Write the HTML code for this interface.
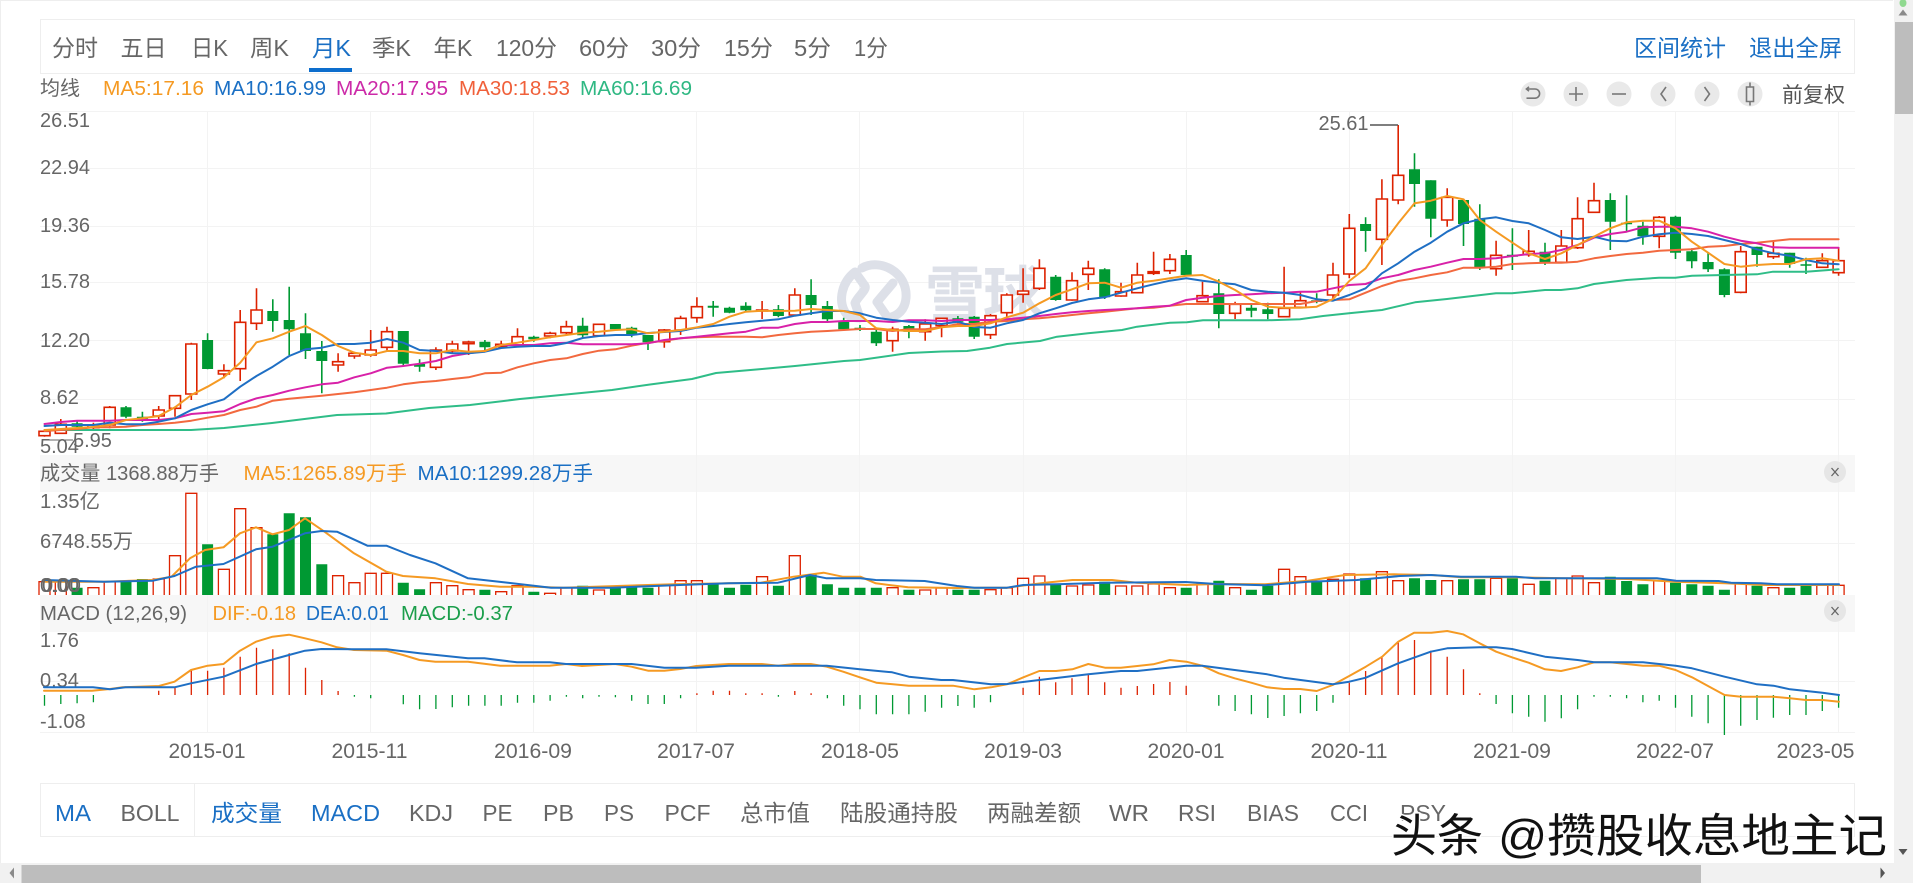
<!DOCTYPE html>
<html lang="zh-CN">
<head>
<meta charset="utf-8">
<title>月K</title>
<style>
html,body{margin:0;padding:0;background:#fff;overflow:hidden;width:1913px;height:883px}
svg{display:block}
text{font-family:"Liberation Sans","Noto Sans CJK SC",sans-serif;fill:#666}
.t{font-size:23px}
.s{font-size:20px}
.b{fill:#1a6fc4}
.o{fill:#f59a23}
.g{fill:#1b9e4b}
.l{fill:none;stroke-width:2;stroke-linejoin:round;stroke-linecap:round}
</style>
</head>
<body>
<svg width="1913" height="883" viewBox="0 0 1913 883" xmlns="http://www.w3.org/2000/svg">
<rect width="1913" height="883" fill="#fff"/>
<rect x="0" y="0" width="1893" height="1" fill="#eee"/>
<rect x="0" y="0" width="1" height="863" fill="#eee"/>

<!-- nav -->
<rect x="40.5" y="19.5" width="1814" height="54" fill="#fff" stroke="#eee"/>
<g class="t">
<text x="52" y="56" textLength="46" lengthAdjust="spacingAndGlyphs">分时</text>
<text x="120.5" y="56" textLength="46" lengthAdjust="spacingAndGlyphs">五日</text>
<text x="191" y="56" textLength="37" lengthAdjust="spacingAndGlyphs">日K</text>
<text x="250" y="56" textLength="39" lengthAdjust="spacingAndGlyphs">周K</text>
<text x="312" y="56" textLength="39" lengthAdjust="spacingAndGlyphs" class="b">月K</text>
<text x="372" y="56" textLength="39" lengthAdjust="spacingAndGlyphs">季K</text>
<text x="433.5" y="56" textLength="39" lengthAdjust="spacingAndGlyphs">年K</text>
<text x="496" y="56" textLength="61" lengthAdjust="spacingAndGlyphs">120分</text>
<text x="579" y="56" textLength="50" lengthAdjust="spacingAndGlyphs">60分</text>
<text x="651" y="56" textLength="50" lengthAdjust="spacingAndGlyphs">30分</text>
<text x="724" y="56" textLength="49" lengthAdjust="spacingAndGlyphs">15分</text>
<text x="794" y="56" textLength="37" lengthAdjust="spacingAndGlyphs">5分</text>
<text x="854" y="56" textLength="34" lengthAdjust="spacingAndGlyphs">1分</text>
<text x="1634" y="56" textLength="92" lengthAdjust="spacingAndGlyphs" class="b">区间统计</text>
<text x="1749" y="56" textLength="93" lengthAdjust="spacingAndGlyphs" class="b">退出全屏</text>
</g>
<rect x="309" y="68" width="43" height="4" fill="#0d6ecd"/>

<!-- legend -->
<g class="s">
<text x="40" y="95" textLength="40" lengthAdjust="spacingAndGlyphs">均线</text>
<text x="103" y="95" textLength="101" lengthAdjust="spacingAndGlyphs" class="o">MA5:17.16</text>
<text x="214" y="95" textLength="112" lengthAdjust="spacingAndGlyphs" class="b">MA10:16.99</text>
<text x="336" y="95" textLength="112" lengthAdjust="spacingAndGlyphs" style="fill:#cc2aa8">MA20:17.95</text>
<text x="459" y="95" textLength="111" lengthAdjust="spacingAndGlyphs" style="fill:#f0603a">MA30:18.53</text>
<text x="580" y="95" textLength="112" lengthAdjust="spacingAndGlyphs" style="fill:#2fb883">MA60:16.69</text>
</g>

<!-- toolbar icons -->
<g fill="#e9e9e9">
<circle cx="1533" cy="94" r="12.5"/><circle cx="1576" cy="94" r="12.5"/><circle cx="1619" cy="94" r="12.5"/>
<circle cx="1663" cy="94" r="12.5"/><circle cx="1707" cy="94" r="12.5"/><circle cx="1750" cy="94" r="12.5"/>
</g>
<g fill="none" stroke="#777" stroke-width="1.6">
<path d="M1526.5 89H1535a4.6 4.6 0 0 1 0 9.2H1526.5M1529 86.8l-2.6 2.2l2.6 2.2"/>
<path d="M1569 94H1583M1576 87V101"/>
<path d="M1612 94H1626"/>
<path d="M1666 87l-5 7l5 7"/>
<path d="M1704.5 87l5 7l-5 7"/>
<path d="M1746.5 87h7v14.5h-7zM1750 82.5V87M1750 101.5V105.5"/>
</g>
<text x="1782" y="102" font-size="21" textLength="63" lengthAdjust="spacingAndGlyphs" style="fill:#555">前复权</text>

<!-- pane headers -->
<rect x="40" y="455" width="1815" height="37" fill="#f7f7f7"/>
<rect x="40" y="595" width="1815" height="37" fill="#f7f7f7"/>

<!-- grid -->
<g stroke="#f3f3f3" stroke-width="1" fill="none">
<path d="M40 111.5H1855M40 168.5H1855M40 226.5H1855M40 282.5H1855M40 340.5H1855M40 399.5H1855M40 543.5H1855M40 681.5H1855M40 732.5H1855"/>
<path d="M207.5 112V733M370.5 112V733M533.5 112V733M696.5 112V733M859.5 112V733M1023.5 112V733M1186.5 112V733M1349.5 112V733M1512.5 112V733M1675.5 112V733M1838.5 112V733"/>
</g>

<!-- xueqiu watermark -->
<g fill="none" stroke="#dde0e8" stroke-width="9" stroke-linejoin="round" stroke-linecap="round">
<path d="M862 268C880 258 908 272 906 298C905 310 898 316 888 318L877 302L893 283"/>
<path d="M855 272C842 282 838 300 845 312C848 317 855 318 860 318L855 303C858 296 867 290 865 286L855 272"/>
</g>
<text x="925" y="316" font-size="60" font-weight="700" style="fill:#dde0e8" textLength="118" lengthAdjust="spacing">雪球</text>

<!-- candles -->
<path fill="none" stroke="#009933" stroke-width="1.6" d="M77.1 420.7V428.3M126 406V418.3M142.4 411.7V421.7M207.6 333.3V369.3M272.8 299.3V331.7M289.2 286.7V355M305.5 313.3V359M321.8 341V393.3M403.3 331V366M419.6 359.3V371.7M484.9 340V352M533.8 335.7V341.7M582.7 317.7V338.3M615.4 324V330M631.7 326.7V337.3M648 335V350M713.2 301V316.7M729.5 306.7V313.3M745.8 302.3V311.7M778.4 305V317.3M811.1 279.3V315M827.4 301V321.7M843.7 317.7V330M860 325V331M876.3 328.3V346M908.9 325V338.3M957.9 316V323.3M974.2 316V339M1055.7 275V300.7M1104.7 268.3V299M1186.2 250V276M1218.8 279.3V328.3M1251.4 303.3V317.3M1267.8 302.7V319.3M1316.7 293.3V303.3M1365.6 217.3V251.7M1414.5 153.3V206.7M1430.8 180.3V237.3M1463.5 200V246M1479.8 204.3V270M1512.4 228.3V270M1545 242.7V265M1610.3 193.3V250M1626.6 195.3V231.7M1642.9 221.7V244.7M1675.5 215.7V259M1691.8 248.3V268.3M1708.1 252.3V272M1724.4 268.3V297.3M1757 246.7V266.7M1789.7 252.7V267.7M1806 257.7V274"/>
<path fill="#009933" d="M71.6 423.3h11V426.7h-11zM120.5 407.3h11V416.7h-11zM136.9 416.7h11V419h-11zM202.1 340h11V369h-11zM267.3 311h11V321h-11zM283.7 320h11V329.3h-11zM300 333.3h11V351h-11zM316.3 351h11V361h-11zM397.8 331h11V363.7h-11zM414.1 364h11V366.7h-11zM479.4 341.7h11V347.3h-11zM528.3 336.7h11V339.3h-11zM577.2 325.7h11V335.3h-11zM609.9 324h11V329.3h-11zM626.2 327.7h11V335.3h-11zM642.5 335h11V342.3h-11zM707.7 305.7h11V307.7h-11zM724 307.7h11V312.7h-11zM740.3 305.7h11V310.3h-11zM772.9 309.3h11V316h-11zM805.6 295h11V305h-11zM821.9 306h11V319.3h-11zM838.2 321.7h11V329.3h-11zM854.5 327.7h11V330h-11zM870.8 331.7h11V343.3h-11zM903.4 326h11V331.7h-11zM952.4 318.3h11V321.7h-11zM968.7 316.7h11V336.7h-11zM1050.2 276.7h11V300h-11zM1099.2 269.3h11V297.3h-11zM1180.7 255h11V275h-11zM1213.3 293.3h11V314h-11zM1245.9 307.7h11V310.7h-11zM1262.3 309.3h11V314h-11zM1311.2 300.3h11V302h-11zM1360.1 224h11V231h-11zM1409 169.3h11V184h-11zM1425.3 180.3h11V218.7h-11zM1458 200h11V224h-11zM1474.3 218.7h11V267.7h-11zM1506.9 254.7h11V256.7h-11zM1539.5 251.7h11V262.3h-11zM1604.8 200h11V221.7h-11zM1621.1 222.7h11V224.3h-11zM1637.4 225.7h11V236.3h-11zM1670 216.7h11V252.7h-11zM1686.3 251.3h11V261.3h-11zM1702.6 262h11V269.3h-11zM1718.9 269.3h11V295h-11zM1751.5 246.7h11V255h-11zM1784.2 252.7h11V264h-11zM1800.5 264.3h11V265.7h-11z"/>
<path fill="none" stroke="#dd2200" stroke-width="1.6" d="M44.5 430V436.7M60.8 419V434M93.4 422.7V429.3M109.7 406V428.3M158.7 406V420M175 395V416.7M191.3 342.7V400M223.9 364.3V378.3M240.2 310V381M256.5 288.3V330M338.1 353.3V371.7M354.4 351.7V358.7M370.7 330V356.7M387 326.7V351.7M435.9 347.3V370M452.3 340.7V353.3M468.6 340.7V355M501.2 340.7V348.3M517.5 328.3V346.7M550.1 331.7V338.3M566.4 320.7V335M599 324V336M664.3 329V347.7M680.6 315.7V335M696.9 297.3V322.7M762.1 301V319M794.8 288.3V316M892.6 326.7V351.7M925.2 319.3V340.7M941.6 318.3V337.3M990.5 314V339M1006.8 293.3V318.3M1023.1 268.3V302.7M1039.4 259.3V290M1072 272.3V300.7M1088.3 260.7V290M1121 282.7V296.7M1137.3 262.7V293.3M1153.6 251.7V275M1169.9 254V274M1202.5 281.7V302.3M1235.1 301.7V319M1284.1 266.7V317.3M1300.4 291.7V308.3M1333 262.7V300M1349.3 214V278.3M1381.9 179.3V265M1398.2 125V204.3M1447.2 188.3V226.7M1496.1 240.7V275.7M1528.7 230V256.7M1561.3 230V263.3M1577.6 197.3V249M1594 182.7V212.3M1659.2 216V248.3M1740.7 246V293.3M1773.4 241.7V259M1822.3 253.3V267.7M1838.6 248.3V275.7"/>
<path fill="#fff" stroke="#dd2200" stroke-width="1.6" d="M39 431.3h11V435.7h-11zM55.3 424.3h11V433.3h-11zM87.9 425h11V427.7h-11zM104.2 407.3h11V425h-11zM153.2 410h11V416h-11zM169.5 395.7h11V408.3h-11zM185.8 344h11V394h-11zM218.4 370.7h11V374h-11zM234.7 322.3h11V368.7h-11zM251 310h11V323.3h-11zM332.6 361.7h11V365h-11zM348.9 353.3h11V356h-11zM365.2 350h11V355h-11zM381.5 331.7h11V347.3h-11zM430.4 350h11V367.3h-11zM446.8 344h11V351h-11zM463.1 342h11V343.7h-11zM495.7 344.3h11V346.7h-11zM512 336.7h11V345h-11zM544.6 333.3h11V336h-11zM560.9 326.7h11V332.7h-11zM593.5 324.3h11V335.7h-11zM658.8 330h11V341.7h-11zM675.1 318.3h11V330h-11zM691.4 306.7h11V317.7h-11zM756.6 310h11V311h-11zM789.3 295h11V315h-11zM887.1 329.3h11V340.7h-11zM919.7 324h11V331.7h-11zM936.1 318.3h11V325.7h-11zM985 315.7h11V334.7h-11zM1001.3 295h11V312.7h-11zM1017.6 291h11V294.3h-11zM1033.9 268.3h11V288.3h-11zM1066.5 280.7h11V300h-11zM1082.8 268.3h11V274.3h-11zM1115.5 291.7h11V296h-11zM1131.8 275h11V292.7h-11zM1148.1 271.7h11V273.3h-11zM1164.4 259.3h11V270.7h-11zM1197 295.7h11V301.7h-11zM1229.6 304.3h11V313.3h-11zM1278.6 308.3h11V316.7h-11zM1294.9 300.7h11V307.3h-11zM1327.5 275h11V295h-11zM1343.8 228.3h11V274h-11zM1376.4 199h11V239.3h-11zM1392.7 175.3h11V200h-11zM1441.7 197.3h11V220h-11zM1490.6 255.3h11V268.7h-11zM1523.2 251.3h11V254.7h-11zM1555.8 246h11V262.3h-11zM1572.1 218.7h11V247.7h-11zM1588.5 200.7h11V212.3h-11zM1653.7 217.3h11V236.3h-11zM1735.2 251.7h11V292.3h-11zM1767.9 253.3h11V256.7h-11zM1816.8 260.7h11V267.3h-11zM1833.1 260.7h11V272.7h-11z"/>

<!-- MA lines -->
<polyline class="l" stroke="#2fbd88" points="44.5,430 191,430 224,428 272,423 337,415 386,413.5 429,408 470,405 520,399 612,390 650,384.5 692,379 716,373 762,369 795,366 844,361 860,360 909,353 942,351.5 967,351 990,347.7 1007,344 1040,341 1057,336.7 1088,333.3 1122,330 1137,326.7 1170,322.7 1187,322.3 1203,320.3 1267,320.3 1300,319.3 1323,316 1349,313.3 1382,310 1415,302.3 1447,299 1496,293.3 1512,293.3 1545,290 1561,290 1577.5,288.3 1594,284 1626.5,280 1659,277.7 1675.4,277.7 1692,275.7 1724,275 1757,274.3 1773,271.7 1806,271.7 1838.6,269.3"/>
<polyline class="l" stroke="#f2693f" points="44.5,431 60.8,430 77.1,429 93.4,427.3 109.7,427.3 126,426.7 142.4,425 158.7,424 175,422.7 191.3,420.7 207.6,417.7 223.9,415 240.2,410 256.5,406.7 272.8,400.7 289.2,398.7 305.5,397.3 321.8,395.7 338.1,394 354.4,392.3 370.7,390 387,387.7 403.3,384.3 419.6,382.3 435.9,381 452.3,379 468.6,377.3 484.9,373.3 501.2,372.7 517.5,367.3 533.8,363.3 550.1,360 566.4,358.3 582.7,354 599,350.7 615.4,349.3 631.7,345.7 648,342.7 664.3,340.7 680.6,338.3 696.9,337.3 713.2,336.7 729.5,336.7 745.8,336.7 762.1,337.3 778.4,335 794.8,333.3 811.1,331.7 827.4,331 843.7,330 860,329 876.3,329 892.6,331 908.9,329.3 925.2,329.3 941.6,327.3 957.9,324 974.2,324 990.5,321.7 1006.8,321 1023.1,319.3 1039.4,318.3 1055.7,316.7 1072,315 1088.3,313.3 1104.7,311.7 1121,310 1137.3,308.3 1153.6,307.7 1169.9,305.7 1186.2,304 1202.5,304 1218.8,304 1235.1,304 1251.4,304 1267.8,304 1284.1,304 1300.4,304 1316.7,301 1333,300 1349.3,299.3 1365.6,292.7 1381.9,286 1398.2,281 1414.5,278.3 1430.8,275 1447.2,272.3 1463.5,267.7 1479.8,267.7 1496.1,266.7 1512.4,264 1528.7,263.3 1545,262.7 1561.3,262.7 1577.6,261.7 1594,258.3 1610.3,256 1626.6,254 1642.9,252.7 1659.2,250.7 1675.5,250 1691.8,249.3 1708.1,246.7 1724.4,246 1740.7,244 1757,242.7 1773.4,241 1789.7,239.3 1806,239.3 1822.3,239.3 1838.6,239.3"/>
<polyline class="l" stroke="#d821a8" points="44.5,424 60.8,422 77.1,420.7 93.4,420.7 109.7,420.7 126,420 142.4,420 158.7,420 175,418.3 191.3,414 207.6,412.7 223.9,411.3 240.2,404 256.5,398.3 272.8,395 289.2,390.7 305.5,387.3 321.8,384.3 338.1,382.7 354.4,377.3 370.7,373.3 387,367.7 403.3,366 419.6,363.7 435.9,361 452.3,356 468.6,353.3 484.9,351 501.2,345 517.5,345 533.8,345 550.1,343.3 566.4,342.7 582.7,344.3 599,344.3 615.4,344.3 631.7,344.3 648,343.3 664.3,340 680.6,338.3 696.9,336.7 713.2,335 729.5,333.3 745.8,331.7 762.1,327.7 778.4,327.7 794.8,324 811.1,322 827.4,322 843.7,321 860,321 876.3,321 892.6,322 908.9,320.3 925.2,320.3 941.6,321 957.9,320 974.2,320 990.5,320 1006.8,319.3 1023.1,317.7 1039.4,316 1055.7,314 1072,312.3 1088.3,311 1104.7,310 1121,309.3 1137.3,308.3 1153.6,306.7 1169.9,305.7 1186.2,300 1202.5,297.7 1218.8,296 1235.1,295 1251.4,294.3 1267.8,293.3 1284.1,292.7 1300.4,291.7 1316.7,291.7 1333,288.3 1349.3,285 1365.6,284 1381.9,278.3 1398.2,275 1414.5,270 1430.8,266.7 1447.2,262.7 1463.5,259 1479.8,259 1496.1,258.3 1512.4,256 1528.7,254 1545,253.3 1561.3,250 1577.6,245 1594,237.7 1610.3,234 1626.6,231.7 1642.9,227.3 1659.2,226.7 1675.5,226.7 1691.8,228.3 1708.1,231.7 1724.4,236.7 1740.7,240.7 1757,243.3 1773.4,247.3 1789.7,247.7 1806,247.7 1822.3,247.7 1838.6,247.7"/>
<polyline class="l" stroke="#1f6fc4" points="44.5,426 60.8,425 77.1,425 93.4,425 109.7,422.7 126,424.3 142.4,424.3 158.7,421.7 175,418.3 191.3,410 207.6,404.3 223.9,399.3 240.2,386.7 256.5,376 272.8,366.7 289.2,356 305.5,349.3 321.8,347.7 338.1,344 354.4,344 370.7,342.7 387,339 403.3,342.7 419.6,350 435.9,351 452.3,353.3 468.6,353.3 484.9,351.7 501.2,348 517.5,346.7 533.8,346 550.1,346 566.4,343 582.7,338 599,336 615.4,335 631.7,335 648,333 664.3,332 680.6,331 696.9,327.7 713.2,326 729.5,324 745.8,322.3 762.1,320.7 778.4,319.3 794.8,315.7 811.1,313.3 827.4,311 843.7,311 860,313.3 876.3,317.7 892.6,320 908.9,321.7 925.2,322.7 941.6,324 957.9,321.7 974.2,327 990.5,327.7 1006.8,323.3 1023.1,320 1039.4,313.3 1055.7,308.3 1072,303 1088.3,299.3 1104.7,297.3 1121,292.7 1137.3,288.3 1153.6,284.3 1169.9,280.7 1186.2,278.3 1202.5,280.7 1218.8,282.7 1235.1,284.3 1251.4,290 1267.8,291.7 1284.1,292.7 1300.4,295 1316.7,299.3 1333,300.7 1349.3,295 1365.6,288.3 1381.9,273.3 1398.2,263.3 1414.5,251.7 1430.8,242.7 1447.2,231.7 1463.5,223.3 1479.8,219.3 1496.1,217.3 1512.4,221 1528.7,223.3 1545,230 1561.3,237.3 1577.6,239 1594,236.7 1610.3,240.7 1626.6,241.3 1642.9,236.7 1659.2,234.3 1675.5,232.7 1691.8,234 1708.1,236 1724.4,240 1740.7,244 1757,249.3 1773.4,253.3 1789.7,255.7 1806,260 1822.3,263.3 1838.6,264.3"/>
<polyline class="l" stroke="#f59a23" points="44.5,430 60.8,429 77.1,428 93.4,427 109.7,425 126,420 142.4,418.3 158.7,416 175,407.3 191.3,395 207.6,386.7 223.9,377.3 240.2,362.7 256.5,342.3 272.8,338.3 289.2,331.7 305.5,326 321.8,335 338.1,346 354.4,352.7 370.7,355 387,351 403.3,351 419.6,353.3 435.9,353.3 452.3,350 468.6,351.7 484.9,351 501.2,345 517.5,342.7 533.8,340 550.1,337.3 566.4,335 582.7,332.7 599,331.7 615.4,330 631.7,329.3 648,333.3 664.3,331.7 680.6,330 696.9,327.3 713.2,324 729.5,316.7 745.8,311.7 762.1,310.7 778.4,311 794.8,310.7 811.1,309 827.4,310 843.7,311 860,315 876.3,328.3 892.6,330 908.9,331 925.2,331 941.6,327.3 957.9,326 974.2,326 990.5,323.3 1006.8,317.3 1023.1,312.7 1039.4,303.3 1055.7,295 1072,289.3 1088.3,283.3 1104.7,282.7 1121,287.7 1137.3,282.7 1153.6,280.7 1169.9,278.3 1186.2,275.7 1202.5,275 1218.8,281.7 1235.1,290 1251.4,300 1267.8,306.7 1284.1,307.7 1300.4,307.7 1316.7,306.7 1333,299 1349.3,281 1365.6,268.3 1381.9,245 1398.2,223.3 1414.5,203.3 1430.8,200.7 1447.2,196 1463.5,199.3 1479.8,220 1496.1,231.7 1512.4,242.7 1528.7,253.3 1545,259 1561.3,253.3 1577.6,245 1594,236.7 1610.3,228.3 1626.6,222.3 1642.9,220.7 1659.2,220.7 1675.5,228.3 1691.8,241.7 1708.1,252.7 1724.4,264 1740.7,266.7 1757,265 1773.4,264 1789.7,264 1806,259.3 1822.3,258.3 1838.6,260.7"/>

<!-- price axis -->
<g class="s">
<text x="40" y="127">26.51</text>
<text x="40" y="174">22.94</text>
<text x="40" y="232">19.36</text>
<text x="40" y="288">15.78</text>
<text x="40" y="347">12.20</text>
<text x="40" y="404">8.62</text>
<text x="40" y="453">5.04</text>
<text x="73" y="447">5.95</text>
<text x="1318.5" y="130">25.61</text>
</g>
<path d="M45 440H73" stroke="#666" stroke-width="1" fill="none"/>
<path d="M1370 125H1398" stroke="#555" stroke-width="1.4" fill="none"/>

<!-- volume header -->
<g class="s">
<text x="40" y="480" textLength="179" lengthAdjust="spacingAndGlyphs">成交量 1368.88万手</text>
<text x="243.5" y="480" textLength="163.5" lengthAdjust="spacingAndGlyphs" class="o">MA5:1265.89万手</text>
<text x="417.5" y="480" textLength="175.5" lengthAdjust="spacingAndGlyphs" class="b">MA10:1299.28万手</text>
<text x="40" y="508" textLength="60" lengthAdjust="spacingAndGlyphs">1.35亿</text>
<text x="40" y="548" textLength="93" lengthAdjust="spacingAndGlyphs">6748.55万</text>
</g>
<circle cx="1835" cy="472" r="11" fill="#e6e6e6"/>
<path d="M1831.5 468L1838.5 476M1838.5 468L1831.5 476" stroke="#666" stroke-width="1.3" fill="none"/>

<!-- volume bars -->
<path fill="#009933" d="M71.6 587.7h11V595h-11zM120.5 581h11V595h-11zM136.9 579h11V595h-11zM202.1 544.3h11V595h-11zM267.3 534.3h11V595h-11zM283.7 513.3h11V595h-11zM300 517.3h11V595h-11zM316.3 564.3h11V595h-11zM397.8 582.7h11V595h-11zM414.1 589.3h11V595h-11zM479.4 589.7h11V595h-11zM528.3 591.7h11V595h-11zM577.2 585.7h11V595h-11zM609.9 587.7h11V595h-11zM626.2 586.7h11V595h-11zM642.5 587.7h11V595h-11zM707.7 583.3h11V595h-11zM724 587.7h11V595h-11zM740.3 584.7h11V595h-11zM772.9 585.7h11V595h-11zM805.6 574.3h11V595h-11zM821.9 584.3h11V595h-11zM838.2 587.7h11V595h-11zM854.5 587.7h11V595h-11zM870.8 587.7h11V595h-11zM903.4 589.7h11V595h-11zM952.4 589.7h11V595h-11zM968.7 589.7h11V595h-11zM1050.2 584h11V595h-11zM1099.2 581.7h11V595h-11zM1180.7 587.7h11V595h-11zM1213.3 580.7h11V595h-11zM1245.9 589.7h11V595h-11zM1262.3 585.7h11V595h-11zM1311.2 581.7h11V595h-11zM1360.1 578.3h11V595h-11zM1409 578.3h11V595h-11zM1425.3 580h11V595h-11zM1458 579.3h11V595h-11zM1474.3 579.3h11V595h-11zM1506.9 578.3h11V595h-11zM1539.5 580.7h11V595h-11zM1604.8 576.7h11V595h-11zM1621.1 581h11V595h-11zM1637.4 584.3h11V595h-11zM1670 582.7h11V595h-11zM1686.3 584.3h11V595h-11zM1702.6 585.7h11V595h-11zM1718.9 589.7h11V595h-11zM1751.5 585.7h11V595h-11zM1784.2 587.7h11V595h-11zM1800.5 585h11V595h-11z"/>
<path fill="none" stroke="#dd2200" stroke-width="1.3" d="M39 595V581.7h11V595M55.3 595V581.7h11V595M87.9 595V587.7h11V595M104.2 595V581.7h11V595M153.2 595V579h11V595M169.5 595V555.7h11V595M185.8 595V493.3h11V595M218.4 595V569.3h11V595M234.7 595V508.7h11V595M251 595V527.7h11V595M332.6 595V575.7h11V595M348.9 595V582.7h11V595M365.2 595V573.3h11V595M381.5 595V573.3h11V595M430.4 595V582.7h11V595M446.8 595V585.7h11V595M463.1 595V589.7h11V595M495.7 595V591.7h11V595M512 595V585.7h11V595M544.6 595V593.3h11V595M560.9 595V587.7h11V595M593.5 595V590h11V595M658.8 595V584.7h11V595M675.1 595V580.7h11V595M691.4 595V580.7h11V595M756.6 595V576.7h11V595M789.3 595V555.7h11V595M887.1 595V587.7h11V595M919.7 595V590h11V595M936.1 595V588h11V595M985 595V589.7h11V595M1001.3 595V588h11V595M1017.6 595V578.3h11V595M1033.9 595V576h11V595M1066.5 595V586h11V595M1082.8 595V585h11V595M1115.5 595V586h11V595M1131.8 595V586h11V595M1148.1 595V584h11V595M1164.4 595V587.7h11V595M1197 595V584h11V595M1229.6 595V587.7h11V595M1278.6 595V569.3h11V595M1294.9 595V576.7h11V595M1327.5 595V579.3h11V595M1343.8 595V574h11V595M1376.4 595V571.7h11V595M1392.7 595V580.7h11V595M1441.7 595V580.7h11V595M1490.6 595V578.3h11V595M1523.2 595V584.3h11V595M1555.8 595V578.3h11V595M1572.1 595V576h11V595M1588.5 595V582.7h11V595M1653.7 595V580.7h11V595M1735.2 595V583.3h11V595M1767.9 595V587.7h11V595M1816.8 595V585.3h11V595M1833.1 595V585.3h11V595"/>
<polyline class="l" stroke="#f59a23" points="44,581.7 104,581.7 153,580 171.5,576.7 190,558.3 205,550 223.5,547.3 240,533.3 256,527.3 272.5,534.3 289,530 305,518.3 324.5,531.7 354,553.3 386.4,571.7 403,576 435.4,578.3 468,584 500.3,586.7 532.7,586.7 563.4,587.7 624.6,585.7 673.6,584.3 728.7,583.3 761,582.7 793.6,576.7 823.6,572.7 842.6,576.7 860.4,576.7 875.7,583.3 908,587.3 957,588 974.4,587.7 1007,587.7 1045,582.7 1072.4,580 1112,580 1137,582.7 1186,585 1216,584 1265,584.3 1308,580.7 1345,575 1394,574.3 1431,575 1461,577.3 1516,577.3 1565,578.3 1627,579 1676,581.7 1724.5,583.3 1767,585 1839,585"/>
<polyline class="l" stroke="#1f6fc4" points="44,580 104,581.7 153,580.7 174.5,576 196,566.7 223.5,564 256,549.3 272.5,546.7 305,533.3 321.5,531 337,531.7 367.4,545.7 386.4,545.7 410,555 435.4,563.3 468,578.3 508,582.7 551,587.7 582,587.7 612,587.7 680,585 728.7,583.3 778,582.7 810,575 826.6,578.3 860.4,578.3 875.7,580 924.7,581 957,586 974.4,587.7 1007,587.7 1023.4,585 1057,584.3 1106,582.7 1186,582 1216,584 1265,585.3 1308,581.7 1357,580 1400,576 1431,575 1461,576.7 1516,576.7 1535,578.3 1657,578.3 1676,580.7 1718.5,581 1731,582.7 1761,583.3 1777,584.3 1839,584.3"/>
<text x="40" y="592" font-size="20">0.00</text>
<text x="42" y="592" font-size="20">0.00</text>

<!-- MACD header -->
<g class="s">
<text x="40" y="620" textLength="147" lengthAdjust="spacingAndGlyphs">MACD (12,26,9)</text>
<text x="212.5" y="620" textLength="83.5" lengthAdjust="spacingAndGlyphs" class="o">DIF:-0.18</text>
<text x="306" y="620" textLength="83" lengthAdjust="spacingAndGlyphs" class="b">DEA:0.01</text>
<text x="401" y="620" textLength="112" lengthAdjust="spacingAndGlyphs" class="g">MACD:-0.37</text>
<text x="40" y="647">1.76</text>
<text x="40" y="687">0.34</text>
<text x="40" y="728">-1.08</text>
</g>
<circle cx="1835" cy="611" r="11" fill="#e6e6e6"/>
<path d="M1831.5 607L1838.5 615M1838.5 607L1831.5 615" stroke="#666" stroke-width="1.3" fill="none"/>

<!-- MACD histogram -->
<path fill="none" stroke="#dd2200" stroke-width="1.3" d="M158.7 695V690.7M175 695V687.7M191.3 695V670M207.6 695V670.7M223.9 695V667.7M240.2 695V656.7M256.5 695V647.7M272.8 695V649.3M289.2 695V653.3M305.5 695V667.7M321.8 695V680M338.1 695V691M696.9 695V693.3M713.2 695V690.7M729.5 695V690.7M745.8 695V693.3M762.1 695V693.3M794.8 695V691M811.1 695V693.3M1023.1 695V687.7M1039.4 695V676.7M1055.7 695V682.3M1072 695V678.3M1088.3 695V675M1104.7 695V682.3M1121 695V687.7M1137.3 695V686M1153.6 695V684M1169.9 695V682M1186.2 695V685.7M1349.3 695V682.7M1365.6 695V671M1381.9 695V656.7M1398.2 695V641.7M1414.5 695V640M1430.8 695V650.7M1447.2 695V656.7M1463.5 695V669.3M1479.8 695V693.3"/>
<path fill="none" stroke="#009933" stroke-width="1.3" d="M44.5 695V705.7M60.8 695V704M77.1 695V703.3M93.4 695V702.3M354.4 695V696.7M370.7 695V698.3M403.3 695V704.3M419.6 695V709.3M435.9 695V709M452.3 695V707.3M468.6 695V705.7M484.9 695V705.7M501.2 695V705.7M517.5 695V702.7M533.8 695V702.7M550.1 695V700.7M566.4 695V696.7M582.7 695V698.3M599 695V696.7M615.4 695V697.3M631.7 695V700.7M648 695V704M664.3 695V704M680.6 695V698.3M778.4 695V696.7M827.4 695V698.3M843.7 695V705.7M860 695V709.3M876.3 695V714.3M892.6 695V714.3M908.9 695V714.3M925.2 695V711.7M941.6 695V707.7M957.9 695V706M974.2 695V707.7M990.5 695V702.3M1218.8 695V705.7M1235.1 695V711M1251.4 695V714.3M1267.8 695V718M1284.1 695V716M1300.4 695V713.3M1316.7 695V711M1333 695V702.7M1496.1 695V704M1512.4 695V713.3M1528.7 695V716.7M1545 695V721.7M1561.3 695V718.3M1577.6 695V709.3M1594 695V696.7M1610.3 695V696.7M1626.6 695V698.3M1642.9 695V702.3M1659.2 695V700.7M1675.5 695V707.7M1691.8 695V716.7M1708.1 695V723.3M1724.4 695V735M1740.7 695V725.7M1757 695V720M1773.4 695V717.7M1789.7 695V715M1806 695V715M1822.3 695V711M1838.6 695V707.7"/>
<polyline class="l" stroke="#f59a23" points="44,690.7 92,690.7 110,689 122.5,687.3 159,686 174.5,681.7 191,670 207.6,665.7 223.5,664 240,650.7 256,641.7 272.5,636.7 289,634.7 305,638.3 321.5,642.3 337,647.3 354,650 386.4,650.7 403,655 419.6,660 435.4,661.7 468,661.7 500.3,665.7 549.4,665.7 566,664 582,666 615,664 631.5,666.7 648,670.7 664.4,670.7 680.3,669 696.3,666 728.7,664 761.8,664 778.3,665.7 794.2,664 810.8,664 826.7,666.7 843.2,671.7 859.8,677.3 876.3,682.7 908.8,685.7 953,685.7 974.4,689.3 991,687.3 1007,684.3 1023.4,677.3 1039.3,671 1056,671 1072.4,669.3 1088.3,664 1105,667.7 1120.8,667.7 1137.3,666 1153.2,664.3 1169.8,660 1186.3,661.7 1202.2,665.7 1218.8,673.3 1234.7,678.3 1251.2,682.7 1267.2,687.3 1283.7,689 1300.2,689 1316.7,691 1332.7,685 1349.2,676 1365.8,666.7 1382.2,656.7 1398.2,641.7 1414.1,632.7 1431.3,632.7 1447.2,631 1463,634.3 1479.7,643.3 1496.2,651.7 1512,657.3 1528.6,662.7 1545,669.3 1561,671 1577.6,667.3 1594.2,662.3 1610,662.3 1626.6,664 1643,665.7 1659,665.7 1675.6,670 1692,677.3 1708,686 1724.6,695 1741,696.7 1757,696.7 1773.5,696.7 1790,698.3 1806,700 1822.5,700 1839,701.7"/>
<polyline class="l" stroke="#1f6fc4" points="44,687.3 79.6,687.3 93,687.3 110,689.3 125.5,687.3 174.5,687.3 191,683.3 223.5,676.7 256,664 289,655 305,650.7 321.5,649 354,649.3 386.4,649.3 419.6,653.3 468,658.3 484.4,658.3 517,662.3 550,662.3 566,664 631.5,664 664.4,667.7 696.3,667.7 728.7,665.7 826.7,665.7 859.8,669.3 892.2,672.3 908.8,676.7 941.2,680 953,680 991,684.3 1007,684 1039.3,680 1088.3,674.3 1120.8,671 1137.3,671 1186.3,665.7 1202.2,665.7 1234.7,670 1267.2,674.3 1283.7,677.7 1332.7,684.3 1349.2,681.7 1365.8,677.7 1398.2,663.3 1430.7,651.7 1447.2,648.3 1479.7,647.3 1496.2,647.3 1512,649 1545,656.7 1577.6,660 1594.2,662.3 1643,662.3 1675.6,665.7 1692,668.3 1724.6,676.7 1757,684.3 1773.5,685.7 1790,689.3 1822.5,692.7 1839,695"/>

<!-- x axis -->
<g font-size="21" text-anchor="middle">
<text x="207" y="758" textLength="77" lengthAdjust="spacingAndGlyphs">2015-01</text>
<text x="369.5" y="758" textLength="76" lengthAdjust="spacingAndGlyphs">2015-11</text>
<text x="533" y="758" textLength="78" lengthAdjust="spacingAndGlyphs">2016-09</text>
<text x="696" y="758" textLength="78" lengthAdjust="spacingAndGlyphs">2017-07</text>
<text x="860" y="758" textLength="78" lengthAdjust="spacingAndGlyphs">2018-05</text>
<text x="1023" y="758" textLength="78" lengthAdjust="spacingAndGlyphs">2019-03</text>
<text x="1186" y="758" textLength="77" lengthAdjust="spacingAndGlyphs">2020-01</text>
<text x="1349" y="758" textLength="77" lengthAdjust="spacingAndGlyphs">2020-11</text>
<text x="1512" y="758" textLength="78" lengthAdjust="spacingAndGlyphs">2021-09</text>
<text x="1675" y="758" textLength="78" lengthAdjust="spacingAndGlyphs">2022-07</text>
<text x="1815.5" y="758" textLength="78" lengthAdjust="spacingAndGlyphs">2023-05</text>
</g>

<!-- bottom tabs -->
<rect x="40.5" y="783.5" width="1814" height="53" fill="#fff" stroke="#eee"/>
<path d="M194.5 784V836" stroke="#eee" fill="none"/>
<g class="t">
<text x="55" y="821" textLength="36" lengthAdjust="spacingAndGlyphs" class="b">MA</text>
<text x="120.5" y="821" textLength="59" lengthAdjust="spacingAndGlyphs">BOLL</text>
<text x="211" y="821" textLength="71" lengthAdjust="spacingAndGlyphs" class="b">成交量</text>
<text x="311" y="821" textLength="69" lengthAdjust="spacingAndGlyphs" class="b">MACD</text>
<text x="409" y="821" textLength="44" lengthAdjust="spacingAndGlyphs">KDJ</text>
<text x="482.5" y="821" textLength="30" lengthAdjust="spacingAndGlyphs">PE</text>
<text x="543" y="821" textLength="31" lengthAdjust="spacingAndGlyphs">PB</text>
<text x="604" y="821" textLength="30" lengthAdjust="spacingAndGlyphs">PS</text>
<text x="664.5" y="821" textLength="46" lengthAdjust="spacingAndGlyphs">PCF</text>
<text x="740" y="821" textLength="70" lengthAdjust="spacingAndGlyphs">总市值</text>
<text x="840" y="821" textLength="118" lengthAdjust="spacingAndGlyphs">陆股通持股</text>
<text x="987" y="821" textLength="94" lengthAdjust="spacingAndGlyphs">两融差额</text>
<text x="1109" y="821" textLength="40" lengthAdjust="spacingAndGlyphs">WR</text>
<text x="1178" y="821" textLength="38" lengthAdjust="spacingAndGlyphs">RSI</text>
<text x="1247" y="821" textLength="52" lengthAdjust="spacingAndGlyphs">BIAS</text>
<text x="1330" y="821" textLength="38" lengthAdjust="spacingAndGlyphs">CCI</text>
<text x="1400" y="821" textLength="46" lengthAdjust="spacingAndGlyphs">PSY</text>
</g>

<!-- toutiao mark -->
<g font-size="46" style="paint-order:stroke">
<text x="1391" y="852" textLength="92" lengthAdjust="spacingAndGlyphs" style="fill:#111;stroke:#fff;stroke-width:3;paint-order:stroke">头条</text>
<text x="1498" y="852" textLength="389" lengthAdjust="spacingAndGlyphs" style="fill:#111;stroke:#fff;stroke-width:3;paint-order:stroke">@攒股收息地主记</text>
</g>

<!-- scrollbars -->
<rect x="1894" y="0" width="19" height="883" fill="#f1f1f1"/>
<rect x="1895" y="22" width="18" height="92" fill="#bdbdbd"/>
<ellipse cx="1903" cy="3" rx="3.5" ry="4" fill="#8fd98f"/>
<path d="M1903 9.5l4.5 6h-9z" fill="#8a8a8a"/>
<path d="M1903 855l-4.5-6h9z" fill="#555"/>
<rect x="0" y="863" width="1913" height="20" fill="#f1f1f1"/>
<rect x="21.5" y="865" width="1679.5" height="18" fill="#bdbdbd"/>
<path d="M9.5 873l4.5-5.5v11z" fill="#8a8a8a"/>
<path d="M1885 873l-4.5-5.5v11z" fill="#555"/>
</svg>
</body>
</html>
